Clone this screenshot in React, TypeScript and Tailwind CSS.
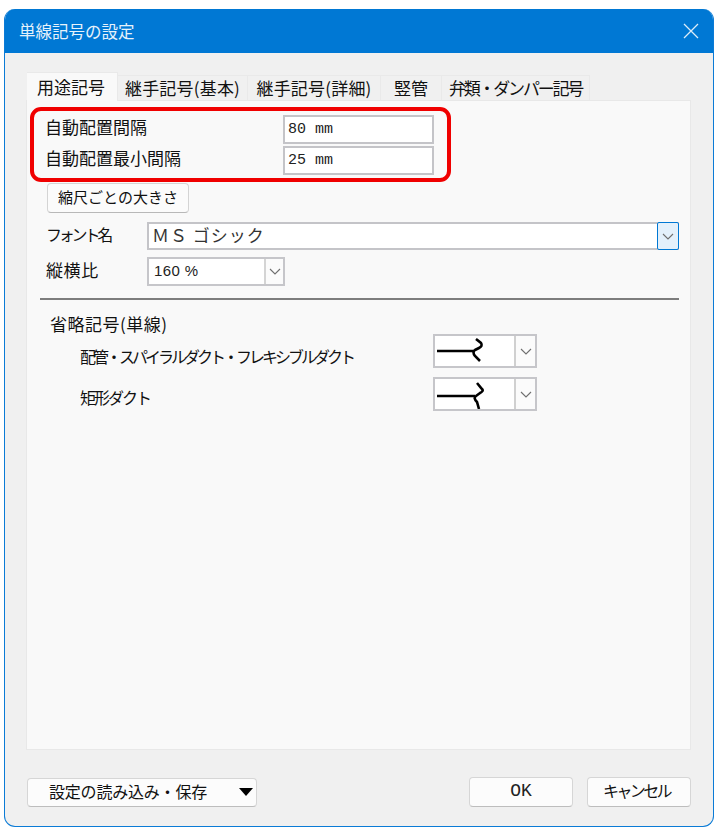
const jp = "font-['Noto_Sans_CJK_JP','Noto_Sans',sans-serif]";

function Chevron({ className = "" }: { className?: string }) {
  return (
    <svg width="12" height="7" viewBox="0 0 12 7" fill="none" className={className}>
      <path d="M1 1 L6 6 L11 1" stroke="#6f6f6f" strokeWidth="1.1" />
    </svg>
  );
}

function Tab({ label, width, active, tracking }: { label: string; width: string; active?: boolean; tracking: string }) {
  return (
    <div
      className={`${width} ${tracking} flex items-center justify-center whitespace-nowrap border-t border-r border-[#e9e9e9] text-[#111] text-[17px] ${
        active ? "h-[29px] bg-[#f9f9f9] relative z-10 -mb-px pr-[2px]" : "h-[25px] bg-[#f0f0f0]"
      }`}
    >
      {label}
    </div>
  );
}

function Field({ label, value }: { label: string; value: string }) {
  return (
    <div className="flex items-center h-[31px]">
      <div className="w-[249px] pl-[11px] pb-[5px] text-[17px] leading-none text-[#111]">{label}</div>
      <div className="w-[151px] h-[29px] bg-white border-2 border-[#c4c4c8] flex items-center pl-[3px] pt-[2px] font-['Liberation_Mono',monospace] text-[15px] text-[#222]">
        {value}
      </div>
    </div>
  );
}

function SymbolCombo({ d1, d2 }: { d1: string; d2: string }) {
  return (
    <div className="w-[104px] h-[34px] flex bg-white border-2 border-[#c6c6ca]">
      <div className="w-[81px] border-r-2 border-[#d0d0d0]">
        <svg width="80" height="30" viewBox="0 0 80 30" fill="none">
          <path d={d1} stroke="#000" strokeWidth="2.6" />
          <path d={d2} stroke="#000" strokeWidth="2.6" />
        </svg>
      </div>
      <div className="flex-1 flex items-center justify-center bg-[#fbfbfb]">
        <Chevron />
      </div>
    </div>
  );
}

function SymbolRow({ label, d1, d2, tracking, lift }: { label: string; d1: string; d2: string; tracking: string; lift: string }) {
  return (
    <div className="flex items-center h-[34px]">
      <div className={`w-[406px] pl-[53px] text-[16px] leading-none whitespace-nowrap text-[#111] ${tracking} ${lift}`}>{label}</div>
      <SymbolCombo d1={d1} d2={d2} />
    </div>
  );
}

export default function App() {
  return (
    <div className={`w-[722px] h-[837px] bg-white pt-[9px] pl-[4px] ${jp}`}>
      <div className="w-[710px] h-[818px] flex flex-col rounded-[11px] overflow-hidden border-[1.5px] border-t-0 border-[#0b7bd6] bg-[#f0f0f0]">
        <div className="h-[44px] shrink-0 bg-[#0078d4] flex items-center justify-between pl-[14px] pr-[14px]">
          <span className="text-[16.5px] text-[#e6f2fb] leading-none">単線記号の設定</span>
          <svg width="16" height="16" viewBox="0 0 16 16" fill="none">
            <path d="M1 1 L15 15 M15 1 L1 15" stroke="#dcecf8" strokeWidth="1.3" />
          </svg>
        </div>

        <div className="flex-1 flex flex-col px-[21px] pt-[19px]">
          <div className="flex items-end pl-px">
            <Tab label="用途記号" width="w-[91px]" active tracking="tracking-[0px]" />
            <Tab label="継手記号(基本)" width="w-[130px]" tracking="tracking-[0.2px]" />
            <Tab label="継手記号(詳細)" width="w-[133px]" tracking="tracking-[0.2px]" />
            <Tab label="竪管" width="w-[61px]" tracking="tracking-[0px]" />
            <Tab label="弁類・ダンパー記号" width="w-[148px]" tracking="tracking-[-2.2px]" />
          </div>

          <div className="h-[650px] w-[665px] bg-[#f9f9f9] border border-[#e8e8e8] pt-[6px] flex flex-col">
            <div className="ml-[3px] w-[421px] h-[75px] border-[4px] border-[#f00000] rounded-[11px] flex flex-col justify-center">
              <Field label="自動配置間隔" value="80 mm" />
              <Field label="自動配置最小間隔" value="25 mm" />
            </div>

            <button className="ml-[20px] mt-[1px] w-[142px] h-[30px] pb-[4px] bg-[#fbfbfb] border border-[#d4d4d4] border-b-[#b8b8b8] rounded-[4px] text-[15px] leading-none text-[#111]">
              縮尺ごとの大きさ
            </button>

            <div className="flex items-center mt-[9px] h-[28px]">
              <div className="w-[120px] pl-[19px] pb-[4px] text-[16px] leading-none whitespace-nowrap text-[#111] tracking-[-3.2px]">フォント名</div>
              <div className="w-[532px] h-[28px] flex bg-white border-2 border-[#c4c4c8] relative">
                <div className="flex-1 pl-[3px] pb-[3px] flex items-center text-[17px] leading-none tracking-[1px] text-[#333] whitespace-pre">ＭＳ ゴシック</div>
                <div className="w-[22px] -my-[2px] -mr-[2px] h-[28px] flex items-center justify-center bg-[#e3f0fb] border border-[#0078d4] rounded-[2px]">
                  <Chevron />
                </div>
              </div>
            </div>

            <div className="flex items-center mt-[7px] h-[28px]">
              <div className="w-[120px] pl-[19px] pb-[3px] text-[17px] leading-none text-[#111] tracking-[0.6px]">縦横比</div>
              <div className="w-[138px] h-[29px] flex bg-white border-2 border-[#c6c6ca]">
                <div className="w-[115px] pl-[5px] flex items-center font-['Liberation_Sans',sans-serif] text-[15px] tracking-[0.4px] text-[#222]">160 %</div>
                <div className="flex-1 border-l-2 border-[#d4d4d4] flex items-center justify-center bg-[#fbfbfb]">
                  <Chevron />
                </div>
              </div>
            </div>

            <div className="ml-[13px] mt-[13px] w-[639px] h-[2px] bg-[#7d7d7d]" />

            <div className="ml-[23px] mt-[14px] text-[17px] leading-[20px] text-[#111] tracking-[0.5px]">省略記号(単線)</div>

            <div className="mt-[0px] flex flex-col gap-[9px]">
              <SymbolRow
                label="配管・スパイラルダクト・フレキシブルダクト"
                tracking="tracking-[-3px]"
                lift="pt-[10px]"
                d1="M2 15 H40"
                d2="M41 3 L46 7 Q48 10 44 12 L40 14 Q37 16 40 20 L45 25"
              />
              <SymbolRow
                label="矩形ダクト"
                tracking="tracking-[-2px]"
                lift="pt-[6px]"
                d1="M2 17 H40"
                d2="M42 4 L47 10 Q49 12 45 14 L41 17 Q38 19 42 23 L44 30"
              />
            </div>
          </div>

          <div className="flex items-center mt-[27px] pl-px">
            <button className="w-[230px] h-[29px] bg-[#fcfcfc] border border-[#d6d6d6] border-b-[#bdbdbd] rounded-[4px] flex items-center pl-[21px] pr-[3px] justify-between">
              <span className="text-[16px] leading-none text-[#111] tracking-[-0.2px] pb-[3px]">設定の読み込み・保存</span>
              <svg width="14" height="8" viewBox="0 0 14 8">
                <path d="M0 0 H14 L7 8 Z" fill="#000" />
              </svg>
            </button>
            <button className="ml-[212px] w-[104px] h-[30px] pb-[2px] bg-[#fcfcfc] border border-[#d6d6d6] border-b-[#bdbdbd] rounded-[4px] font-['Liberation_Mono',monospace] text-[18px] leading-none text-[#222]">
              OK
            </button>
            <button className="ml-[14px] w-[104px] h-[30px] pb-[5px] pr-[5px] bg-[#fcfcfc] border border-[#d6d6d6] border-b-[#bdbdbd] rounded-[4px] text-[16px] leading-none text-[#111] tracking-[-2.6px]">
              キャンセル
            </button>
          </div>
        </div>
      </div>
    </div>
  );
}
